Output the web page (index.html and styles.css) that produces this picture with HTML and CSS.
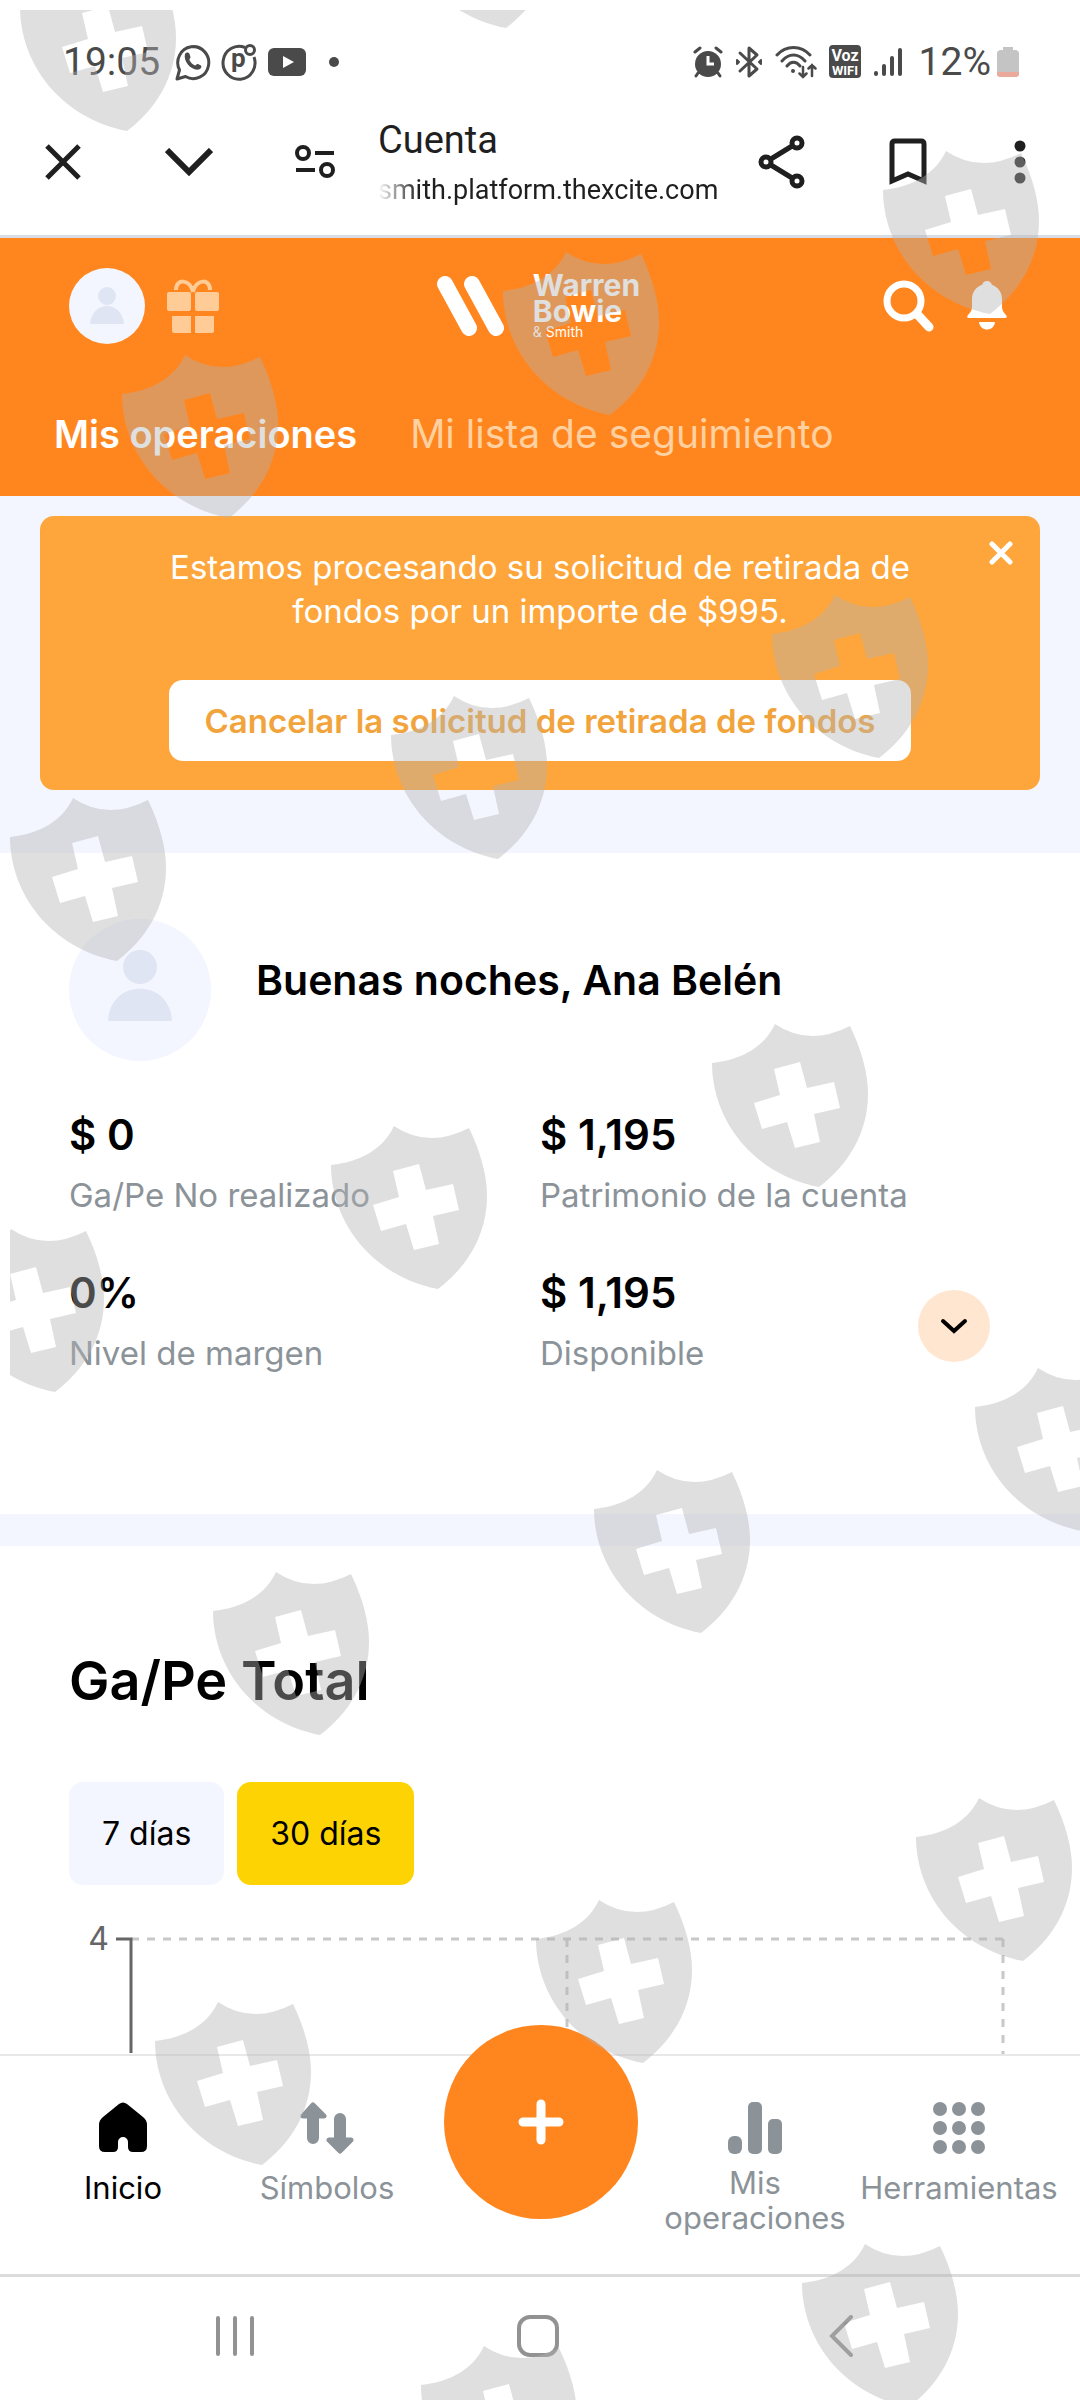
FILE: index.html
```
<!DOCTYPE html>
<html lang="es">
<head>
    <meta charset="UTF-8">
    <meta name="viewport" content="width=device-width, initial-scale=1.0">
    <title>Cuenta</title>
    <link rel="stylesheet" href="styles.css">
</head>
<body>

    <div class="status-bar">
        <span class="time">19:05</span>
        <div class="status-left">
            <svg width="36" height="38" viewBox="0 0 36 38" fill="none" stroke="#4a4a4a" stroke-width="3">
                <path d="M2 36 L4.500 27 A15.500 16 0 1 1 10.500 33.500 Z" stroke-linejoin="round"/>
                <path d="M10 11 c1-2 4-2 4.500 0 l1 3 c0 1.500-1.500 2-1 3 c1 2.500 3 4.500 5.500 5.500 c1 0 1.500-2 3-1.500 l3 1.500 c1 1 0 3.500-2 4 C16 28 8 18 10 11z" fill="#4a4a4a" stroke="none"/>
            </svg>
            <svg width="36" height="38" viewBox="0 0 36 38" fill="none" stroke="#4a4a4a" stroke-width="3">
                <path d="M24 4.500 A16 16.500 0 1 0 33 14"/>
                <circle cx="29" cy="7" r="4.500"/>
                <text x="10" y="24" class="icon-p">p</text>
            </svg>
            <svg width="40" height="28" viewBox="0 0 40 28">
                <rect x="1" y="0" width="38" height="28" rx="6" fill="#4a4a4a"/>
                <path d="M16 8 L27 14 L16 20z" fill="#fff"/>
            </svg>
            <span class="dot"></span>
        </div>
        <div class="status-right">
            <svg width="30" height="32" viewBox="0 0 30 32">
                <circle cx="15" cy="18" r="13" fill="#4a4a4a"/>
                <path d="M2 6 L7 2 M28 6 L23 2 M5 27 L3 30 M25 27 L27 30" stroke="#4a4a4a" stroke-width="3" stroke-linecap="round"/>
                <path d="M15 10 V18 H21" fill="none" stroke="#fff" stroke-width="3"/>
            </svg>
            <svg width="28" height="34" viewBox="0 0 28 34" fill="none" stroke="#4a4a4a" stroke-width="3" stroke-linejoin="round" stroke-linecap="round">
                <path d="M5 8 L22 24 L14 31 V3 L22 10 L5 26"/>
                <path d="M2 15 v4 l2-2z M26 15 v4 l-2-2z" stroke-width="2"/>
            </svg>
            <svg width="42" height="34" viewBox="0 0 42 34" fill="none" stroke="#4a4a4a" stroke-width="3" stroke-linecap="round">
                <path d="M2 10 C11 0 26 0 35 10 M7 16 C14 8 23 8 30 16 M12 21 C16 16 21 16 25 21"/>
                <circle cx="18" cy="26" r="2" fill="#4a4a4a" stroke="none"/>
                <path d="M28 22 V32 M24.500 28.500 L28 32 L31.500 28.500 M37 31 V20 M33.500 23.500 L37 20 L40.500 23.500" stroke-width="2.500"/>
            </svg>
            <svg width="32" height="34" viewBox="0 0 32 34">
                <rect width="32" height="33" rx="4" fill="#4a4a4a"/>
                <text x="16" y="16" class="icon-voz">Voz</text>
                <text x="16" y="30" class="icon-wifi">WIFI</text>
            </svg>
            <svg width="30" height="32" viewBox="0 0 30 32" stroke="#4a4a4a" stroke-width="4" stroke-linecap="round">
                <path d="M3 27 V28 M11 20 V28 M19 12 V28 M27 4 V28"/>
            </svg>
        </div>
        <span class="battery-text">12%</span>
        <svg width="22" height="32" viewBox="0 0 22 32">
            <path d="M0 7 Q0 5 3 4 H6 V1 H16 V4 H19 Q22 5 22 7 V27 H0z" fill="#c4c4c4"/>
            <path d="M0 26 H22 V28 Q22 31 19 31 H3 Q0 31 0 28z" fill="#e9aa9c"/>
        </svg>
    </div>

    <div class="toolbar">
        <button class="tool" aria-label="Cerrar">
            <svg width="36" height="36" viewBox="0 0 36 36"><path d="M2 2 L34 34 M34 2 L2 34" stroke="#1f1f1f" stroke-width="5"/></svg>
        </button>
        <button class="tool" aria-label="Minimizar">
            <svg width="48" height="28" viewBox="0 0 48 28"><path d="M2 2 L24 24 L46 2" fill="none" stroke="#1f1f1f" stroke-width="6"/></svg>
        </button>
        <button class="tool" aria-label="Información del sitio">
            <svg width="40" height="34" viewBox="0 0 40 34" fill="none" stroke="#1f1f1f" stroke-width="4">
                <circle cx="8" cy="8" r="6"/><circle cx="32" cy="25" r="6"/><path d="M20 8 H39 M1 25 H20"/>
            </svg>
        </button>
        <div class="page-info">
            <div class="page-title">Cuenta</div>
            <div class="page-url">smith.platform.thexcite.com</div>
        </div>
        <button class="tool" aria-label="Compartir">
            <svg width="48" height="54" viewBox="0 0 48 54" fill="none" stroke="#1f1f1f" stroke-width="5">
                <path d="M8 27 L39 8 M8 27 L39 46"/>
                <g fill="#fff"><circle cx="8" cy="27" r="5"/><circle cx="39" cy="8" r="5"/><circle cx="39" cy="46" r="5"/></g>
            </svg>
        </button>
        <button class="tool" aria-label="Guardar">
            <svg width="38" height="48" viewBox="0 0 38 48"><path d="M3 43 V6 Q3 3 6 3 H32 Q35 3 35 6 V43 L19 36z" fill="none" stroke="#1f1f1f" stroke-width="5"/></svg>
        </button>
        <button class="tool tool-more" aria-label="Más opciones">
            <svg width="12" height="44" viewBox="0 0 12 44" fill="#1f1f1f"><circle cx="6" cy="6" r="5.500"/><circle cx="6" cy="22" r="5.500"/><circle cx="6" cy="38" r="5.500"/></svg>
        </button>
    </div>

    <header class="app-header">
        <div class="header-row">
            <div class="header-group">
                <button class="avatar" aria-label="Perfil">
                    <svg width="34" height="40" viewBox="0 0 34 40" fill="#e0e5f3"><circle cx="17" cy="10" r="9"/><path d="M0 38 C2 14 32 14 34 38z"/></svg>
                </button>
                <button class="icon-button" aria-label="Regalos">
                    <svg width="52" height="54" viewBox="0 0 52 54" fill="#ffcb96">
                        <rect x="0" y="13" width="24" height="19" rx="2"/><rect x="28" y="13" width="24" height="19" rx="2"/>
                        <path d="M5 37 H24 V54 H7 Q5 54 5 52z M28 37 H47 V52 Q47 54 45 54 H28z"/>
                        <path d="M26 13 C23 0 9 -1 9 11 M26 13 C29 0 43 -1 43 11" fill="none" stroke="#ffcb96" stroke-width="4"/>
                    </svg>
                </button>
            </div>
            <a class="brand" href="#">
                <svg width="70" height="62" viewBox="0 0 70 62" stroke="#fff" stroke-width="16" stroke-linecap="round"><path d="M9 9 L33 53 M36 9 L60 53"/></svg>
                <span class="brand-name">
                    <b>Warren</b>
                    <b>Bowie</b>
                    <small>&amp; Smith</small>
                </span>
            </a>
            <div class="header-group header-right">
                <button class="icon-button" aria-label="Buscar">
                    <svg width="52" height="52" viewBox="0 0 52 52" fill="none" stroke="#fff"><circle cx="21" cy="21" r="17" stroke-width="7"/><path d="M34 34 L46 47" stroke-width="9" stroke-linecap="round"/></svg>
                </button>
                <button class="icon-button" aria-label="Notificaciones">
                    <svg width="40" height="50" viewBox="0 0 40 50" fill="#fff">
                        <circle cx="20" cy="5" r="5"/>
                        <path d="M20 3 C29 3 35 10 35 18 V26 Q35 30 39 34 Q41 37 38 37 H2 Q-1 37 1 34 Q5 30 5 26 V18 C5 10 11 3 20 3z"/>
                        <path d="M12 41 H28 C27 51 13 51 12 41z"/>
                    </svg>
                </button>
            </div>
        </div>
        <nav class="tabs">
            <a class="tab tab-active" href="#">Mis operaciones</a>
            <a class="tab" href="#">Mi lista de seguimiento</a>
        </nav>
    </header>

    <section class="banner-wrap">
        <div class="banner">
            <button class="banner-close" aria-label="Cerrar aviso">
                <svg width="24" height="24" viewBox="0 0 24 24"><path d="M3 3 L21 21 M21 3 L3 21" stroke="#fff" stroke-width="5" stroke-linecap="round"/></svg>
            </button>
            <p class="banner-text">Estamos procesando su solicitud de retirada de fondos por un importe de $995.</p>
            <button class="banner-button">Cancelar la solicitud de retirada de fondos</button>
        </div>
    </section>

    <section class="account">
        <div class="greeting-row">
            <div class="avatar-large">
                <svg width="64" height="72" viewBox="0 0 64 72" fill="#e0e5f3"><circle cx="32" cy="17" r="17"/><path d="M0 71 C2 28 62 28 64 71z"/></svg>
            </div>
            <h1 class="greeting">Buenas noches, Ana Belén</h1>
        </div>
        <div class="stats">
            <div class="stat">
                <div class="value">$ 0</div>
                <div class="label">Ga/Pe No realizado</div>
            </div>
            <div class="stat">
                <div class="value">$ 1,195</div>
                <div class="label">Patrimonio de la cuenta</div>
            </div>
            <div class="stat">
                <div class="value">0%</div>
                <div class="label">Nivel de margen</div>
            </div>
            <div class="stat-with-button">
                <div class="stat">
                    <div class="value">$ 1,195</div>
                    <div class="label">Disponible</div>
                </div>
                <button class="expand" aria-label="Ver más">
                    <svg width="28" height="16" viewBox="0 0 28 16"><path d="M3 3 L14 13 L25 3" fill="none" stroke="#000" stroke-width="4" stroke-linecap="round"/></svg>
                </button>
            </div>
        </div>
    </section>

    <section class="total">
        <h2 class="total-title">Ga/Pe Total</h2>
        <div class="periods">
            <button class="period">7 días</button>
            <button class="period period-active">30 días</button>
        </div>
        <div class="chart">
            <span class="axis-label">4</span>
            <svg class="plot">
                <g stroke="#c8c8c8" stroke-width="3" stroke-dasharray="8 8">
                    <line x1="0" y1="14" x2="100%" y2="14"/>
                    <line x1="50%" y1="14" x2="50%" y2="100%"/>
                    <line x1="100%" y1="14" x2="100%" y2="100%"/>
                </g>
                <path d="M-15 14 H0 V128" fill="none" stroke="#666" stroke-width="3"/>
            </svg>
        </div>
    </section>

    <nav class="bottom-nav">
        <a class="nav-item nav-active" href="#">
            <svg width="48" height="50" viewBox="0 0 48 50"><path d="M20 2 Q24 -1 28 2 L44 15 Q48 18 48 23 V44 Q48 50 42 50 H34 Q29 50 29 45 V40 A5 5 0 0 0 19 40 V45 Q19 50 14 50 H6 Q0 50 0 44 V23 Q0 18 4 15z"/></svg>
            <span>Inicio</span>
        </a>
        <a class="nav-item" href="#">
            <svg width="54" height="52" viewBox="0 0 54 52" fill="#8b9399" stroke="#8b9399" stroke-linejoin="round" stroke-linecap="round">
                <path d="M3 14 L13 3 L24 14z M29 38 H51 L40 49z" stroke-width="5"/><path d="M13 14 V36 M40 17 V38" stroke-width="12"/>
            </svg>
            <span>Símbolos</span>
        </a>
        <div class="fab-cell">
            <button class="fab" aria-label="Nueva operación">
                <svg width="46" height="46" viewBox="0 0 46 46"><path d="M23 5 V41 M5 23 H41" stroke="#fff" stroke-width="9" stroke-linecap="round"/></svg>
            </button>
        </div>
        <a class="nav-item nav-two-lines" href="#">
            <svg width="54" height="52" viewBox="0 0 54 52" fill="#8b9399"><rect x="0" y="34" width="14" height="18" rx="6"/><rect x="20" y="0" width="14" height="52" rx="5"/><rect x="40" y="17" width="14" height="35" rx="5"/></svg>
            <span>Mis operaciones</span>
        </a>
        <a class="nav-item" href="#">
            <svg width="52" height="52" viewBox="0 0 52 52" fill="#8b9399">
                <circle cx="7" cy="7" r="7"/><circle cx="26" cy="7" r="7"/><circle cx="45" cy="7" r="7"/>
                <circle cx="7" cy="26" r="7"/><circle cx="26" cy="26" r="7"/><circle cx="45" cy="26" r="7"/>
                <circle cx="7" cy="45" r="7"/><circle cx="26" cy="45" r="7"/><circle cx="45" cy="45" r="7"/>
            </svg>
            <span>Herramientas</span>
        </a>
    </nav>

    <div class="system-nav">
        <button class="system-button" aria-label="Recientes">
            <svg width="40" height="42" viewBox="0 0 40 42" stroke="#929292" stroke-width="4" stroke-linecap="round"><path d="M3 3 V39 M20 3 V39 M37 3 V39"/></svg>
        </button>
        <button class="system-button" aria-label="Inicio">
            <svg width="42" height="42" viewBox="0 0 42 42"><rect x="2" y="2" width="38" height="38" rx="11" fill="none" stroke="#929292" stroke-width="4"/></svg>
        </button>
        <button class="system-button" aria-label="Atrás">
            <svg width="24" height="42" viewBox="0 0 24 42"><path d="M22 2 L3 21 L22 40" fill="none" stroke="#929292" stroke-width="4" stroke-linecap="round"/></svg>
        </button>
    </div>

    <!-- shield watermark over the whole page -->
    <svg class="watermark" aria-hidden="true">
        <defs>
            <path id="shield" fill="#b3b3b3" fill-rule="evenodd" d="M0 39 C30 36 53 22 63 0 Q97 23 138 2 C150 27 156 50 156 70 C156 110 135 142 107 163 C40 150 0 95 0 39z M88 38 L62 45 L68 71 L42 79 L50 105 L75 98 L83 124 L108 118 L102 90 L128 84 L122 58 L95 64z"/>
        </defs>
        <g opacity="0.42" transform="translate(-10 -10)">
            <use href="#shield" x="20" y="-32"/>
            <use href="#shield" x="399" y="-135"/>
            <use href="#shield" x="883" y="151"/>
            <use href="#shield" x="503" y="252"/>
            <use href="#shield" x="122" y="355"/>
            <use href="#shield" x="772" y="595"/>
            <use href="#shield" x="391" y="696"/>
            <use href="#shield" x="10" y="798"/>
            <use href="#shield" x="712" y="1024"/>
            <use href="#shield" x="331" y="1126"/>
            <use href="#shield" x="-52" y="1229"/>
            <use href="#shield" x="975" y="1368"/>
            <use href="#shield" x="594" y="1470"/>
            <use href="#shield" x="213" y="1572"/>
            <use href="#shield" x="916" y="1798"/>
            <use href="#shield" x="536" y="1900"/>
            <use href="#shield" x="155" y="2002"/>
            <use href="#shield" x="802" y="2244"/>
            <use href="#shield" x="421" y="2346"/>
        </g>
    </svg>

</body>
</html>
```
FILE: styles.css
```
* {
    box-sizing: border-box;
}

body {
    position: relative;
    margin: 0;
    font-family: 'Inter', 'Open Sans', sans-serif;
    background-color: #fff;
    color: #000;
}

button {
    padding: 0;
    border: 0;
    background: none;
    font-family: inherit;
    color: inherit;
    cursor: pointer;
}

a {
    color: inherit;
    text-decoration: none;
}

h1, h2, p {
    margin: 0;
}

svg {
    display: block;
    flex-shrink: 0;
}

/* Phone status bar */
.status-bar {
    display: flex;
    align-items: center;
    padding: 38px 61px 16px 63px;
    font-family: 'Roboto', sans-serif;
    font-size: 39px;
    line-height: 48px;
    color: #4a4a4a;
}

.status-left {
    display: flex;
    align-items: center;
    gap: 10px;
    flex: 1;
    padding-left: 15px;
}

.dot {
    width: 10px;
    height: 10px;
    margin-left: 12px;
    border-radius: 50%;
    background-color: #4a4a4a;
}

.status-right {
    display: flex;
    align-items: center;
    gap: 12px;
    padding-right: 16px;
}

.battery-text {
    padding-right: 6px;
}

.icon-p {
    font: bold 26px 'Roboto', sans-serif;
    fill: #4a4a4a;
    stroke: none;
}

.icon-voz, .icon-wifi {
    font: bold 16px 'Roboto', sans-serif;
    fill: #fff;
    text-anchor: middle;
}

.icon-wifi {
    font-size: 13px;
}

/* Browser toolbar */
.toolbar {
    display: flex;
    align-items: center;
    height: 136px;
    padding: 0 11px 13px 0;
    border-bottom: 3px solid #dadde6;
    font-family: 'Roboto', sans-serif;
    color: #1f1f1f;
}

.tool {
    display: flex;
    justify-content: center;
    width: 126px;
}

.tool-more {
    width: 98px;
}

.page-info {
    flex: 1;
    min-width: 0;
    padding-top: 6px;
    line-height: 50px;
    white-space: nowrap;
}

.page-title {
    font-size: 38px;
}

.page-url {
    overflow: hidden;
    font-size: 27px;
    -webkit-mask-image: linear-gradient(to right, transparent, #000 40px);
    mask-image: linear-gradient(to right, transparent, #000 40px);
}

/* Orange app header */
.app-header {
    padding: 30px 0 38px;
    background-color: #ff861e;
    color: #fff;
}

.header-row {
    display: grid;
    grid-template-columns: 1fr auto 1fr;
    align-items: center;
    padding: 0 73px 0 69px;
}

.header-group {
    display: flex;
    align-items: center;
    gap: 22px;
}

.header-right {
    justify-content: flex-end;
    gap: 32px;
}

.avatar {
    display: flex;
    align-items: center;
    justify-content: center;
    width: 76px;
    height: 76px;
    border-radius: 50%;
    background-color: #f3f6ff;
}

.brand {
    display: flex;
    align-items: center;
    gap: 27px;
}

.brand-name {
    display: flex;
    flex-direction: column;
    font-size: 30px;
    line-height: 26px;
}

.brand-name small {
    font-size: 14px;
    line-height: 16px;
}

.tabs {
    display: flex;
    gap: 53px;
    padding: 66px 54px 0;
    font-size: 39px;
    line-height: 48px;
}

.tab {
    color: #ffd0a0;
}

.tab-active {
    color: #fff;
    font-size: 38px;
    font-weight: 600;
}

/* Withdrawal notice */
.banner-wrap {
    padding: 20px 40px 63px;
    background-color: #f3f6ff;
}

.banner {
    position: relative;
    display: flex;
    flex-direction: column;
    align-items: center;
    gap: 47px;
    padding: 29px 100px;
    border-radius: 14px;
    background-color: #fea63b;
    color: #fff;
}

.banner-close {
    position: absolute;
    top: 25px;
    right: 27px;
}

.banner-text {
    font-size: 33px;
    line-height: 44px;
    text-align: center;
}

.banner-button {
    height: 81px;
    padding: 0 36px;
    border-radius: 14px;
    background-color: #fff;
    color: #f2a43c;
    font-size: 33px;
    font-weight: 600;
}

/* Account summary */
.account {
    padding: 66px 69px 139px;
    border-bottom: 32px solid #f3f6ff;
}

.greeting-row {
    display: flex;
    gap: 45px;
}

.avatar-large {
    display: flex;
    justify-content: center;
    width: 142px;
    height: 142px;
    padding-top: 31px;
    border-radius: 50%;
    background-color: #f3f6ff;
}

.greeting {
    padding-top: 35px;
    font-size: 41px;
    line-height: 52px;
    font-weight: 600;
}

.stats {
    display: grid;
    grid-template-columns: 1fr 1fr;
    row-gap: 44px;
    padding-top: 42px;
}

.stat {
    display: flex;
    flex-direction: column;
    gap: 6px;
}

.value {
    font-size: 42px;
    line-height: 64px;
    font-weight: 600;
}

.label {
    font-size: 33px;
    line-height: 44px;
    color: #8b9399;
}

.stat-with-button {
    display: flex;
    justify-content: space-between;
    align-items: flex-end;
    padding-right: 21px;
}

.expand {
    display: flex;
    align-items: center;
    justify-content: center;
    width: 72px;
    height: 72px;
    margin-bottom: 13px;
    border-radius: 50%;
    background-color: #ffe6d0;
}

/* Profit and loss chart */
.total {
    padding: 103px 77px 0 69px;
}

.total-title {
    font-size: 54px;
    line-height: 64px;
    font-weight: 600;
}

.periods {
    display: flex;
    gap: 13px;
    padding: 69px 0 40px;
}

.period {
    height: 103px;
    padding: 0 33px;
    border-radius: 14px;
    background-color: #f3f6ff;
    font-size: 32px;
}

.period-active {
    background-color: #fed304;
}

.chart {
    display: flex;
    font-size: 32px;
    line-height: 28px;
    color: #666;
}

.axis-label {
    width: 62px;
    padding-right: 22px;
    text-align: right;
}

.plot {
    flex: 1;
    height: 129px;
    overflow: visible;
}

/* Bottom navigation */
.bottom-nav {
    position: relative;
    display: grid;
    grid-template-columns: 1fr 1fr 224px 1fr 1fr;
    height: 220px;
    padding: 0 19px 0 21px;
    border-top: 2px solid #e8e8e8;
    background-color: #fff;
}

.nav-item {
    display: flex;
    flex-direction: column;
    align-items: center;
    gap: 16px;
    padding-top: 46px;
    color: #8b9399;
    font-size: 31px;
    line-height: 35px;
    text-align: center;
}

.nav-active {
    gap: 18px;
    color: #000;
}

.nav-two-lines {
    gap: 11px;
}

.fab-cell {
    display: flex;
    justify-content: center;
}

.fab {
    position: absolute;
    top: -31px;
    display: flex;
    align-items: center;
    justify-content: center;
    width: 194px;
    height: 194px;
    border-radius: 50%;
    background-color: #ff861e;
}

/* Phone navigation keys */
.system-nav {
    display: grid;
    grid-template-columns: 1fr 1fr 1fr;
    height: 126px;
    padding: 0 88px 5px 84px;
    border-top: 3px solid #dcdcdc;
}

.system-button {
    display: flex;
    align-items: center;
    justify-content: center;
}

.watermark {
    position: absolute;
    top: 10px;
    left: 10px;
    width: calc(100% - 10px);
    height: calc(100% - 10px);
    overflow: hidden;
    pointer-events: none;
}
```
